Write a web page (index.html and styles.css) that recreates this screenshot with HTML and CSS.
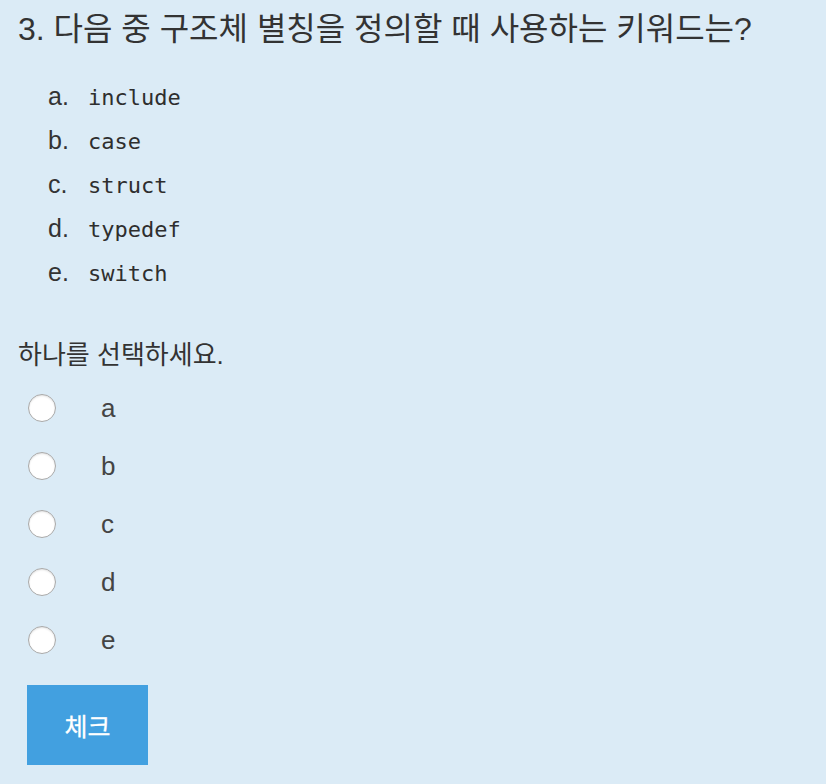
FILE: index.html
```html
<!DOCTYPE html>
<html lang="ko">
<head>
<meta charset="utf-8">
<link rel="stylesheet" href="styles.css">
</head>
<body>
<div class="page">
  <h1 class="question">3. 다음 중 구조체 별칭을 정의할 때 사용하는 키워드는?</h1>
  <ol class="choices">
    <li><span class="letter">a.</span><code>include</code></li>
    <li><span class="letter">b.</span><code>case</code></li>
    <li><span class="letter">c.</span><code>struct</code></li>
    <li><span class="letter">d.</span><code>typedef</code></li>
    <li><span class="letter">e.</span><code>switch</code></li>
  </ol>
  <p class="prompt">하나를 선택하세요.</p>
  <div class="answers">
    <label class="answer"><span class="radio"></span><span class="alabel">a</span></label>
    <label class="answer"><span class="radio"></span><span class="alabel">b</span></label>
    <label class="answer"><span class="radio"></span><span class="alabel">c</span></label>
    <label class="answer"><span class="radio"></span><span class="alabel">d</span></label>
    <label class="answer"><span class="radio"></span><span class="alabel">e</span></label>
  </div>
  <button class="check">체크</button>
</div>
</body>
</html>
```
FILE: styles.css
```css
html, body {
  margin: 0;
  padding: 0;
  background: #dbebf6;
}
body {
  font-family: "Liberation Sans", "Noto Sans CJK KR", sans-serif;
  color: #333;
}
.page {
  padding: 9px 0 0 18px;
}
.question {
  margin: 0;
  font-size: 32px;
  font-weight: normal;
  line-height: 40px;
}
.choices {
  list-style: none;
  margin: 25px 0 0 0;
  padding: 0 0 0 30px;
}
.choices li {
  display: flex;
  align-items: baseline;
  height: 44px;
  line-height: 44px;
}
.letter {
  font-size: 25px;
  width: 40px;
}
code {
  font-family: "DejaVu Sans Mono", monospace;
  font-size: 22px;
  color: #2e2e2e;
}
.prompt {
  margin: 46px 0 0 0;
  font-size: 26px;
  line-height: 30px;
}
.answers {
  margin-top: 9px;
  display: flex;
  flex-direction: column;
}
.answer {
  display: flex;
  align-items: center;
  height: 58px;
  padding-left: 10px;
}
.radio {
  width: 28px;
  height: 28px;
  border-radius: 50%;
  background: #fff;
  border: 1px solid #a9a9a9;
  box-sizing: border-box;
  box-shadow: inset 0 1px 2px rgba(0,0,0,0.12);
}
.alabel {
  margin-left: 45px;
  font-size: 26px;
  color: #444;
}
.check {
  display: flex;
  align-items: center;
  justify-content: center;
  margin-top: 16px;
  margin-left: 9px;
  width: 121px;
  height: 80px;
  border: none;
  padding: 0;
  background: #42a0e0;
  color: #fff;
  font-family: "Noto Sans CJK KR", sans-serif;
  font-size: 25px;
  font-weight: normal;
  -webkit-text-stroke: 0.3px #fff;
}
```
